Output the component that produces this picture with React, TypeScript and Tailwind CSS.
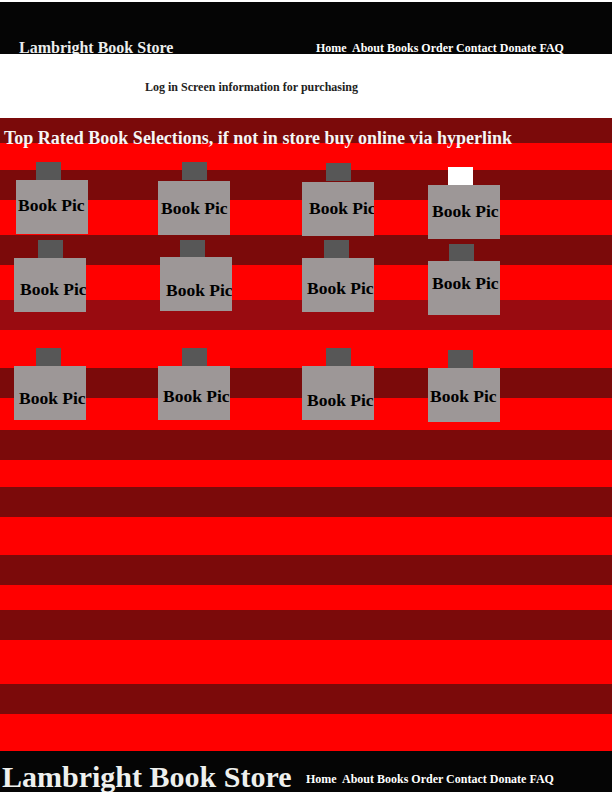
import React from "react";

const stripes = [
  { h: "h-[25px]", c: "bg-[#7b0a0a]" },
  { h: "h-[27px]", c: "bg-[#ff0000]" },
  { h: "h-[30px]", c: "bg-[#7b0a0a]" },
  { h: "h-[35px]", c: "bg-[#ff0000]" },
  { h: "h-[30px]", c: "bg-[#7b0a0a]" },
  { h: "h-[35px]", c: "bg-[#ff0000]" },
  { h: "h-[30px]", c: "bg-[#990b10]" },
  { h: "h-[38px]", c: "bg-[#ff0000]" },
  { h: "h-[30px]", c: "bg-[#7b0a0a]" },
  { h: "h-[32px]", c: "bg-[#ff0000]" },
  { h: "h-[30px]", c: "bg-[#7b0a0a]" },
  { h: "h-[27px]", c: "bg-[#ff0000]" },
  { h: "h-[30px]", c: "bg-[#7b0a0a]" },
  { h: "h-[38px]", c: "bg-[#ff0000]" },
  { h: "h-[30px]", c: "bg-[#7b0a0a]" },
  { h: "h-[25px]", c: "bg-[#ff0000]" },
  { h: "h-[30px]", c: "bg-[#7b0a0a]" },
  { h: "h-[44px]", c: "bg-[#ff0000]" },
  { h: "h-[30px]", c: "bg-[#7b0a0a]" },
  { h: "h-[37px]", c: "bg-[#ff0000]" },
];

type Book = {
  pos: string; // margin-left / margin-top of the whole item
  tab: string; // tab offset inside the box
  gap?: string;
  text: string; // text padding inside the box
  white?: boolean;
};

const rows: { h: string; books: Book[] }[] = [
  {
    h: "h-[78px]",
    books: [
      { pos: "ml-[16px] mt-0", tab: "ml-[20px]", text: "pt-[17px] pl-[2px]" },
      { pos: "ml-[70px] mt-0", tab: "ml-[24px]", gap: "mt-[1px]", text: "pt-[19px] pl-[3px]" },
      { pos: "ml-[72px] mt-[1px]", tab: "ml-[24px]", gap: "mt-[1px]", text: "pt-[18px] pl-[7px]" },
      { pos: "ml-[54px] mt-[5px]", tab: "ml-[20px]", text: "pt-[18px] pl-[4px]", white: true },
    ],
  },
  {
    h: "h-[108px]",
    books: [
      { pos: "ml-[14px] mt-0", tab: "ml-[24px]", text: "pt-[23px] pl-[6px]" },
      { pos: "ml-[74px] mt-0", tab: "ml-[20px]", gap: "-mt-[1px]", text: "pt-[25px] pl-[6px]" },
      { pos: "ml-[70px] mt-0", tab: "ml-[22px]", text: "pt-[22px] pl-[5px]" },
      { pos: "ml-[54px] mt-[4px]", tab: "ml-[21px]", gap: "-mt-[1px]", text: "pt-[14px] pl-[4px]" },
    ],
  },
  {
    h: "h-[80px]",
    books: [
      { pos: "ml-[14px] mt-0", tab: "ml-[22px]", text: "pt-[24px] pl-[5px]" },
      { pos: "ml-[72px] mt-0", tab: "ml-[24px]", text: "pt-[22px] pl-[5px]" },
      { pos: "ml-[72px] mt-0", tab: "ml-[24px]", text: "pt-[26px] pl-[5px]" },
      { pos: "ml-[54px] mt-[2px]", tab: "ml-[20px]", text: "pt-[20px] pl-[2px]" },
    ],
  },
];

function BookPic({ book }: { book: Book }) {
  return (
    <div className={`flex flex-col w-[72px] ${book.pos}`}>
      <div className={`h-[18px] w-[25px] ${book.tab} ${book.white ? "bg-white" : "bg-[#575757]"}`} />
      <div className={`h-[54px] w-[72px] overflow-hidden bg-[#9d9797] ${book.gap ?? ""}`}>
        <p className={`whitespace-nowrap text-[17.5px] leading-none font-bold text-black ${book.text}`}>
          Book Pic
        </p>
      </div>
    </div>
  );
}

export default function App() {
  return (
    <div className="w-[612px] h-[792px] overflow-hidden bg-white font-['Liberation_Serif','Times_New_Roman',serif]">
      <header className="mt-[2px] flex h-[52px] overflow-hidden bg-[#050505] pt-[38px] pl-[19px]">
        <h1 className="w-[297px] shrink-0 text-[16px] leading-none font-bold text-[#eceeee]">
          Lambright Book Store
        </h1>
        <nav className="mt-[2px] whitespace-pre text-[12px] leading-none font-bold text-white">
          Home  About Books Order Contact Donate FAQ
        </nav>
      </header>

      <section className="h-[64px] bg-white pt-[27px] pl-[145px]">
        <p className="text-[12px] leading-none font-bold text-[#222222]">
          Log in Screen information for purchasing
        </p>
      </section>

      <main className="relative h-[633px]">
        {stripes.map((s, i) => (
          <div key={i} className={`${s.h} ${s.c}`} />
        ))}

        <div className="absolute inset-0">
          <h2 className="pt-[11px] pl-[4px] text-[18px] leading-none font-bold text-[#f6f6f6] whitespace-nowrap">
            Top Rated Book Selections, if not in store buy online via hyperlink
          </h2>
          <div className="mt-[15px]">
            {rows.map((row, r) => (
              <div key={r} className={`flex items-start ${row.h}`}>
                {row.books.map((b, i) => (
                  <BookPic key={i} book={b} />
                ))}
              </div>
            ))}
          </div>
        </div>
      </main>

      <footer className="flex h-[41px] overflow-hidden bg-[#050505] pt-[11px] pl-[2px]">
        <div className="w-[304px] shrink-0 text-[30px] leading-none font-bold text-[#eef0ee] whitespace-nowrap">
          Lambright Book Store
        </div>
        <nav className="mt-[11px] whitespace-pre text-[12px] leading-none font-bold text-white">
          Home  About Books Order Contact Donate FAQ
        </nav>
      </footer>
    </div>
  );
}
